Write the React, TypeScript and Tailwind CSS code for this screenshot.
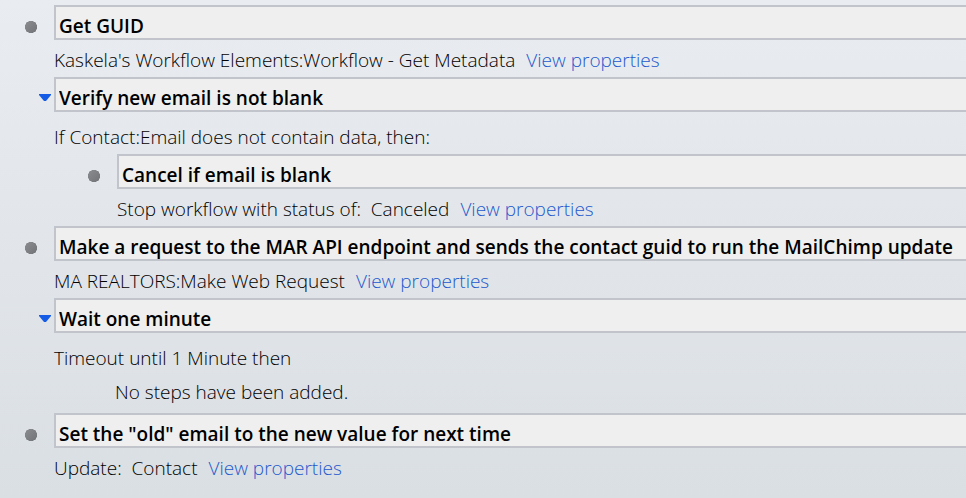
import React from "react";

function Marker({ open }: { open?: boolean }) {
  return open ? (
    <svg className="absolute -left-[15px] top-[17px] h-2 w-3" viewBox="0 0 12 8" aria-hidden="true">
      <path d="M0 0H12V1L7 7H5L0 1Z" fill="#145be6" />
    </svg>
  ) : (
    <svg className="absolute -left-[29px] top-4 size-3" viewBox="0 0 12 12" aria-hidden="true">
      <defs>
        <linearGradient id="bullet" x1="0" y1="0" x2="1" y2="1">
          <stop offset="0" stopColor="#8b8c8f" />
          <stop offset="1" stopColor="#727376" />
        </linearGradient>
      </defs>
      <path d="M4 0H8L9 1H10L11 2V3L12 4V8L11 9V10L10 11H9L8 12H4L3 11H2L1 10V9L0 8V4L1 3V2L2 1H3Z" fill="url(#bullet)" />
    </svg>
  );
}

function Title({ label, open }: { label: string; open?: boolean }) {
  return (
    <div className="relative">
      <Marker open={open} />
      <input
        aria-label="Step description"
        defaultValue={label}
        className="block h-[35px] w-full border-2 border-r-0 border-[#c1c4cb] bg-[#efefef] px-[3px] pt-1.5 text-[19px] font-semibold text-black outline-none"
      />
    </div>
  );
}

function Detail({ children }: { children: React.ReactNode }) {
  return (
    <p className="flex h-[37px] items-center gap-[11px] pt-1 whitespace-pre">
      <span>{children}</span>
      <a href="#properties" className="text-[#2359cd]">View properties</a>
    </p>
  );
}

export default function App() {
  return (
    <main className="min-h-screen bg-linear-to-b from-[#e9ecf1] to-[#dadfe3] pt-[5px] pl-[54px] font-['Open_Sans',sans-serif] text-[19px] font-light text-black">
      <Title label="Get GUID" />
      <Detail>Kaskela's Workflow Elements:Workflow - Get Metadata</Detail>
      <Title label="Verify new email is not blank" open />
      <p className="flex h-[42px] items-center pt-2">If Contact:Email does not contain data, then:</p>
      <div className="pl-[63px]">
        <Title label="Cancel if email is blank" />
        <Detail>Stop workflow with status of:  Canceled</Detail>
      </div>
      <Title label="Make a request to the MAR API endpoint and sends the contact guid to run the MailChimp update" />
      <Detail>MA REALTORS:Make Web Request</Detail>
      <Title label="Wait one minute" open />
      <p className="flex h-[42px] items-center pt-2">Timeout until 1 Minute then</p>
      <p className="flex h-[38px] items-center pb-1 pl-[61px]">No steps have been added.</p>
      <Title label={'Set the "old" email to the new value for next time'} />
      <Detail>Update:  Contact</Detail>
    </main>
  );
}
